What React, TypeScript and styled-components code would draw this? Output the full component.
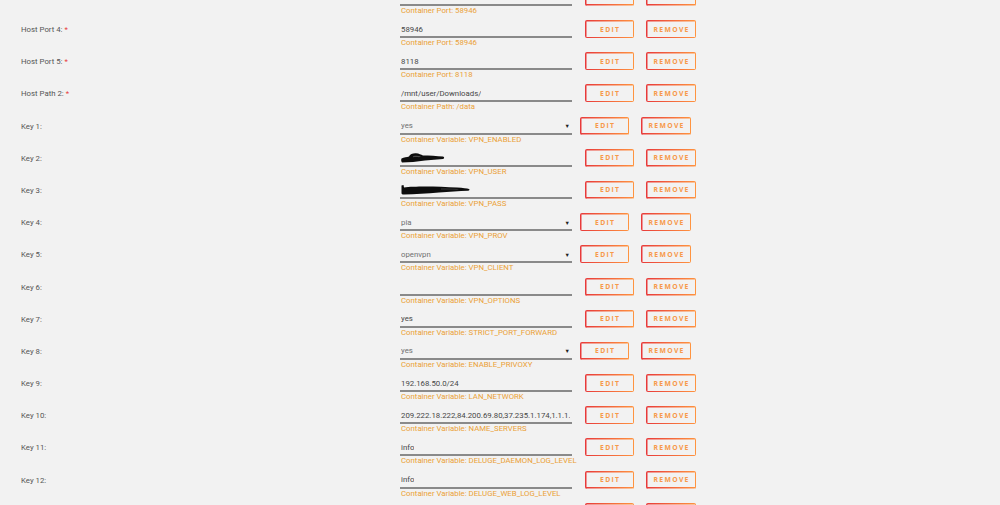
import React from "react";
import styled, { createGlobalStyle } from "styled-components";

const Global = createGlobalStyle`
  html, body {
    margin: 0;
    padding: 0;
    background: #f2f2f2;
    overflow: hidden;
  }
  body {
    font-family: Roboto, "Open Sans", sans-serif;
  }
`;

type Field =
  | { kind: "text"; value: string }
  | { kind: "select"; value: string }
  | { kind: "masked"; variant: "short" | "long" };

interface Setting {
  label: string;
  required?: boolean;
  field: Field;
  note: string;
}

const settings: Setting[] = [
  { label: "Host Port 3:", required: true, field: { kind: "text", value: "58946" }, note: "Container Port: 58946" },
  { label: "Host Port 4:", required: true, field: { kind: "text", value: "58946" }, note: "Container Port: 58946" },
  { label: "Host Port 5:", required: true, field: { kind: "text", value: "8118" }, note: "Container Port: 8118" },
  { label: "Host Path 2:", required: true, field: { kind: "text", value: "/mnt/user/Downloads/" }, note: "Container Path: /data" },
  { label: "Key 1:", field: { kind: "select", value: "yes" }, note: "Container Variable: VPN_ENABLED" },
  { label: "Key 2:", field: { kind: "masked", variant: "short" }, note: "Container Variable: VPN_USER" },
  { label: "Key 3:", field: { kind: "masked", variant: "long" }, note: "Container Variable: VPN_PASS" },
  { label: "Key 4:", field: { kind: "select", value: "pia" }, note: "Container Variable: VPN_PROV" },
  { label: "Key 5:", field: { kind: "select", value: "openvpn" }, note: "Container Variable: VPN_CLIENT" },
  { label: "Key 6:", field: { kind: "text", value: "" }, note: "Container Variable: VPN_OPTIONS" },
  { label: "Key 7:", field: { kind: "text", value: "yes" }, note: "Container Variable: STRICT_PORT_FORWARD" },
  { label: "Key 8:", field: { kind: "select", value: "yes" }, note: "Container Variable: ENABLE_PRIVOXY" },
  { label: "Key 9:", field: { kind: "text", value: "192.168.50.0/24" }, note: "Container Variable: LAN_NETWORK" },
  {
    label: "Key 10:",
    field: { kind: "text", value: "209.222.18.222,84.200.69.80,37.235.1.174,1.1.1.1,1.0.0.1" },
    note: "Container Variable: NAME_SERVERS",
  },
  { label: "Key 11:", field: { kind: "text", value: "info" }, note: "Container Variable: DELUGE_DAEMON_LOG_LEVEL" },
  { label: "Key 12:", field: { kind: "text", value: "info" }, note: "Container Variable: DELUGE_WEB_LOG_LEVEL" },
  { label: "Key 13:", field: { kind: "text", value: "" }, note: "Container Variable: DELUGE_LOG_LEVEL" },
];

const List = styled.div`
  margin-top: -19.2px;
  display: flex;
  flex-direction: column;
`;

const Row = styled.div`
  display: flex;
  align-items: flex-start;
  height: 32.2px;
  padding-top: 7px;
  box-sizing: border-box;
`;

const Label = styled.div`
  flex: 0 0 400px;
  box-sizing: border-box;
  padding-left: 21px;
  padding-top: 1px;
  line-height: 18px;
  font-size: 7.8px;
  color: #555;
`;

const Required = styled.span`
  color: #e83a3a;
  margin-left: 2px;
`;

const FieldColumn = styled.div`
  flex: 0 0 172px;
  width: 172px;
  min-width: 0;
  display: flex;
  flex-direction: column;
`;

const Box = styled.div<{ $select?: boolean }>`
  height: 16px;
  box-sizing: border-box;
  padding: 2px 2px 0 1px;
  border-bottom: 2px solid #8a8a8a;
  display: flex;
  align-items: center;
  justify-content: space-between;
  overflow: hidden;
  white-space: nowrap;
  font-size: 7.8px;
  color: ${(p) => (p.$select ? "#707070" : "#474747")};
  height: 18px;
`;

const Value = styled.span`
  overflow: hidden;
  white-space: nowrap;
`;

const Arrow = styled.span`
  font-size: 5.5px;
  color: #222;
  margin-top: 1px;
`;

const Note = styled.div`
  font-size: 7.8px;
  line-height: 10px;
  color: #eba136;
  padding-left: 1px;
  white-space: nowrap;
`;

const Actions = styled.div<{ $select?: boolean }>`
  flex: none;
  display: flex;
  gap: 12px;
  margin-left: ${(p) => (p.$select ? "8px" : "13px")};
`;

const Button = styled.button<{ $wide?: boolean }>`
  width: ${(p) => (p.$wide ? "50px" : "49px")};
  height: 18px;
  padding: 0;
  border: 0;
  border-radius: 2px;
  font-family: "Open Sans", "Noto Sans", sans-serif;
  font-weight: 700;
  font-size: 6.8px;
  letter-spacing: 1.3px;
  text-indent: 1.3px;
  text-transform: uppercase;
  color: #f7994a;
  cursor: pointer;
  background:
    linear-gradient(90deg, #e83a3a, #ff9440) 0 0 / 100% 1.5px no-repeat,
    linear-gradient(90deg, #e83a3a, #ff9440) 0 100% / 100% 1.5px no-repeat,
    linear-gradient(#e83a3a, #e83a3a) 0 0 / 1.5px 100% no-repeat,
    linear-gradient(#ff9440, #ff9440) 100% 0 / 1.5px 100% no-repeat;
`;

/* Black marker strokes hiding the private values */
function Scribble({ variant }: { variant: "short" | "long" }) {
  if (variant === "short") {
    return (
      <svg width={46} height={13} viewBox="0 0 46 13">
        <path
          d="M0.5 7.5 C 3 6.5, 6 6, 8 5.5 C 9 3, 12 2, 15 2.2 C 18 2.5, 20 3.5, 22 4.5 C 28 4.5, 36 5, 42 5.5 C 43.5 6, 43.5 7.5, 42 8 C 36 8.5, 30 9, 24 9.5 C 16 10.5, 8 11.5, 1 11.5 C 0 10.5, 0 8.5, 0.5 7.5 Z"
          fill="#0d0d0d"
        />
        <path d="M12 5.2 C 15 4.6, 18 4.8, 20 5.4 L 18 6.2 C 16 5.9, 14 5.9, 12 6.2 Z" fill="#4a4a4a" />
      </svg>
    );
  }
  return (
    <svg width={72} height={13} viewBox="0 0 72 13">
      <path
        d="M0.5 2.5 L 2.5 2 L 3 4.5 C 8 3.8, 16 3.5, 24 3.5 C 34 3.5, 46 4, 56 4.6 C 62 5, 66 5.4, 68 6 C 69 6.6, 68.5 7.6, 67 7.8 C 58 8.2, 48 8.8, 38 9.5 C 26 10.4, 14 11.2, 3 11.6 C 1 11.6, 0.2 10.5, 0.5 9.5 Z"
        fill="#0d0d0d"
      />
      <path d="M40 5.5 C 46 5.3, 52 5.5, 58 6 L 56 6.7 C 50 6.4, 45 6.4, 40 6.6 Z" fill="#3a3a3a" />
    </svg>
  );
}

function FieldView({ field }: { field: Field }) {
  if (field.kind === "select") {
    return (
      <Box $select>
        <Value>{field.value}</Value>
        <Arrow>▼</Arrow>
      </Box>
    );
  }
  if (field.kind === "masked") {
    return (
      <Box>
        <Scribble variant={field.variant} />
      </Box>
    );
  }
  return (
    <Box>
      <Value>{field.value}</Value>
    </Box>
  );
}

export default function App() {
  return (
    <>
      <Global />
      <List>
        {settings.map((s, i) => {
          const isSelect = s.field.kind === "select";
          return (
            <Row key={i}>
              <Label>
                {s.label}
                {s.required && <Required>*</Required>}
              </Label>
              <FieldColumn>
                <FieldView field={s.field} />
                <Note>{s.note}</Note>
              </FieldColumn>
              <Actions $select={isSelect}>
                <Button>Edit</Button>
                <Button $wide>Remove</Button>
              </Actions>
            </Row>
          );
        })}
      </List>
    </>
  );
}
